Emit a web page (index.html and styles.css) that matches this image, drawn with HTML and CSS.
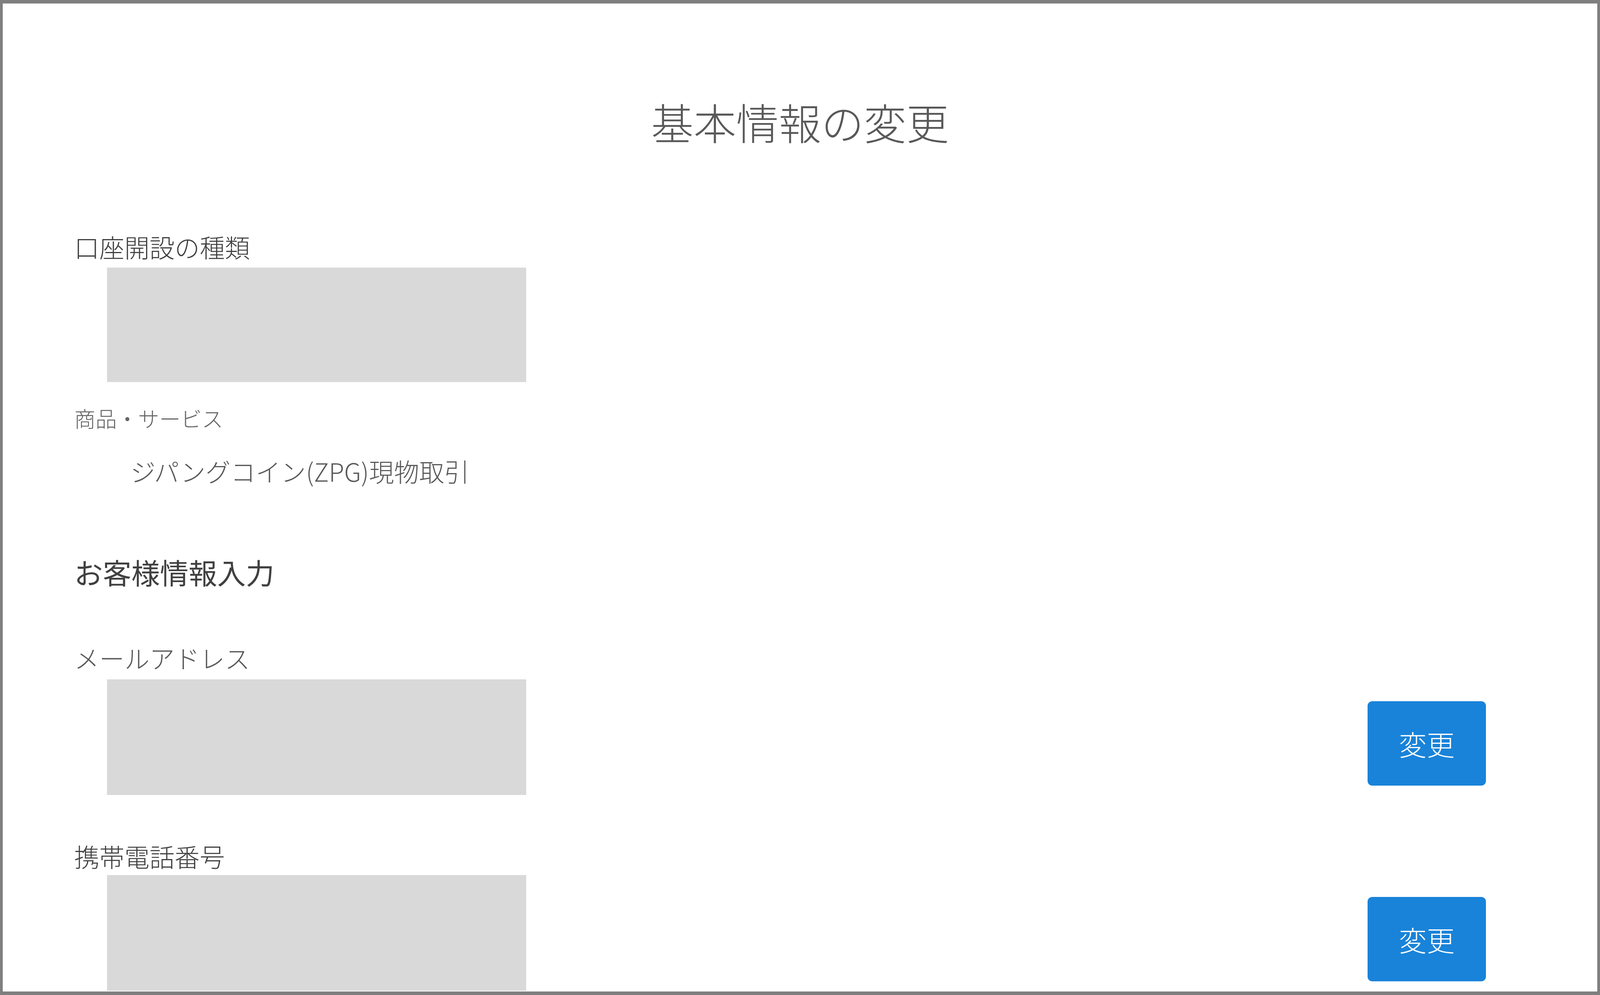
FILE: index.html
```html
<!DOCTYPE html>
<html lang="ja">
<head>
<meta charset="utf-8">
<title>基本情報の変更</title>
<link rel="stylesheet" href="styles.css">
</head>
<body>
<div class="page">
  <h1 class="title">基本情報の変更</h1>
  <div class="content">
    <div class="label label-dark label-first">口座開設の種類</div>
    <div class="field"></div>
    <div class="sublabel">商品・サービス</div>
    <div class="product">ジパングコイン(ZPG)現物取引</div>
    <h2 class="section">お客様情報入力</h2>
    <div class="label label-email">メールアドレス</div>
    <div class="row row-email">
      <div class="field field-tall"></div>
      <button class="btn" type="button">変更</button>
    </div>
    <div class="label label-dark label-phone">携帯電話番号</div>
    <div class="row">
      <div class="field field-tall"></div>
      <button class="btn" type="button">変更</button>
    </div>
  </div>
</div>
</body>
</html>
```
FILE: styles.css
```css
:root {
  --u: calc(100vw / 4836);
  --f: calc(100vw / 4836 * 0.7 + 0.3px);
}
html, body {
  margin: 0;
  padding: 0;
  background: #ffffff;
  overflow: hidden;
}
body {
  font-family: "Noto Sans CJK JP", "Noto Sans", sans-serif;
  font-weight: 300;
}
.page {
  box-sizing: border-box;
  width: 100vw;
  height: 100vh;
  border-style: solid;
  border-color: #7f7f7f;
  border-width: 9px calc(var(--u) * 9);
  overflow: hidden;
  background: #ffffff;
}
.title {
  margin: 217px 0 0 0;
  font-size: calc(var(--f) * 122);
  line-height: 170px;
  font-weight: 300;
  color: #595959;
  text-align: center;
}
.content {
  padding: 0 calc(var(--u) * 337) 0 calc(var(--u) * 216);
}
.label {
  font-size: calc(var(--f) * 72);
  line-height: 100px;
  color: #595959;
  white-space: nowrap;
}
.label-dark {
  color: #404040;
}
.label-first {
  margin-top: 185px;
}
.field {
  margin: 4px 0 0 calc(var(--u) * 99);
  width: calc(var(--u) * 1267);
  height: 293px;
  background: #d9d9d9;
}
.field-tall {
  margin-top: 0;
  height: 296px;
  flex: none;
}
.sublabel {
  margin-top: 47px;
  font-size: calc(var(--f) * 61);
  line-height: 90px;
  color: #666666;
  white-space: nowrap;
}
.product {
  margin-top: 40px;
  padding-left: calc(var(--u) * 170);
  font-size: calc(var(--f) * 72);
  line-height: 100px;
  color: #595959;
  white-space: nowrap;
}
.section {
  margin: 153px 0 0 0;
  font-size: calc(var(--f) * 82);
  line-height: 110px;
  font-weight: 400;
  color: #404040;
  white-space: nowrap;
}
.label-email {
  margin-top: 115px;
}
.row {
  display: flex;
  justify-content: space-between;
  align-items: flex-start;
}
.row-email {
  margin-top: 6px;
}
.label-phone {
  margin-top: 107px;
  line-height: 98px;
}
.btn {
  flex: none;
  margin-top: 56px;
  width: calc(var(--u) * 357);
  height: 216px;
  border: none;
  border-radius: 12px;
  background: #1983d9;
  color: #ffffff;
  font-family: "Noto Sans CJK JP", "Noto Sans", sans-serif;
  font-weight: 300;
  font-size: calc(var(--f) * 80);
  line-height: 216px;
  padding: 0;
  cursor: pointer;
}
```
